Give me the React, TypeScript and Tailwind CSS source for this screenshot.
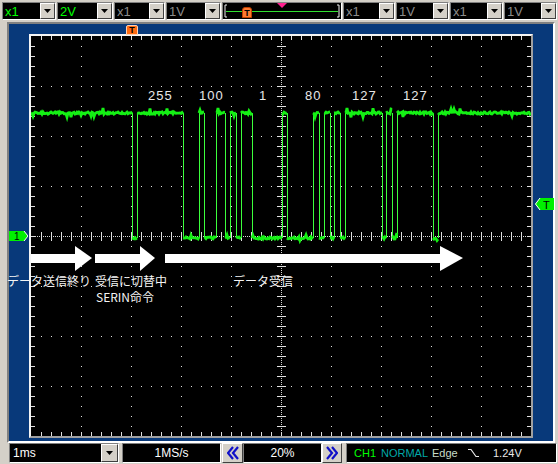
import React from "react";

// transition x positions inside the 500x400 screen (signal starts high)
const EDGES = [101, 106, 152, 168, 173, 185, 194, 199, 205, 210, 221, 251, 256, 282, 288, 293, 299, 303, 309, 314, 351, 355, 361, 366, 402, 407];
const HI = 77;
const LO = 202;

function rng(seed: number) {
  let s = seed;
  return () => {
    s = (s * 1103515245 + 12345) & 0x7fffffff;
    return s / 0x7fffffff;
  };
}

function noisyPath(x0: number, x1: number, y: number, seed: number) {
  const r = rng(seed);
  let d = `M${x0} ${y}`;
  for (let x = x0 + 1; x <= x1; x++) {
    let dy = (r() - 0.5) * 2.2;
    if (r() < 0.07) dy = (r() < 0.6 ? -1 : 1) * (2 + r() * 3);
    d += ` L${x} ${(y + dy).toFixed(1)}`;
  }
  return d;
}

function segments() {
  const out: { x0: number; x1: number; high: boolean }[] = [];
  let x0 = 0;
  let high = true;
  for (const t of EDGES) {
    out.push({ x0, x1: t, high });
    x0 = t;
    high = !high;
  }
  out.push({ x0, x1: 500, high });
  return out;
}

function Screen() {
  const cols = [50, 100, 150, 200, 300, 350, 400, 450];
  const rows = [50, 100, 150, 250, 300, 350];
  const steps = Array.from({ length: 39 }, (_, i) => (i + 1) * 10);
  const stepsX = Array.from({ length: 49 }, (_, i) => (i + 1) * 10);
  const segs = segments();

  return (
    <svg width="500" height="400" viewBox="0 0 500 400" className="block">
      <rect width="500" height="400" fill="#000" />
      {/* grid dots */}
      {cols.map((cx) =>
        steps.map((y) => <rect key={`c${cx}-${y}`} x={cx} y={y} width="1" height="1" fill="#e0e0e0" />)
      )}
      {rows.map((ry) =>
        stepsX.map((x) => <rect key={`r${ry}-${x}`} x={x} y={ry} width="1" height="1" fill="#e0e0e0" />)
      )}
      {/* centre axes */}
      <line x1="250.5" y1="0" x2="250.5" y2="400" stroke="#d8d8d8" strokeDasharray="1 1" />
      <line x1="0" y1="200.5" x2="500" y2="200.5" stroke="#d8d8d8" strokeDasharray="1 1" />
      {steps.map((y) => (
        <line key={`vt${y}`} x1="246" y1={y + 0.5} x2="255" y2={y + 0.5} stroke="#e0e0e0" />
      ))}
      {stepsX.map((x) => (
        <line key={`ht${x}`} x1={x + 0.5} y1="196" x2={x + 0.5} y2="205" stroke="#e0e0e0" />
      ))}
      {/* edge ticks */}
      {stepsX.map((x) => (
        <g key={`et${x}`}>
          <line x1={x + 0.5} y1="0" x2={x + 0.5} y2="4" stroke="#e0e0e0" />
          <line x1={x + 0.5} y1="396" x2={x + 0.5} y2="400" stroke="#e0e0e0" />
        </g>
      ))}
      {steps.map((y) => (
        <g key={`el${y}`}>
          <line x1="0" y1={y + 0.5} x2="4" y2={y + 0.5} stroke="#e0e0e0" />
          <line x1="496" y1={y + 0.5} x2="500" y2={y + 0.5} stroke="#e0e0e0" />
        </g>
      ))}

      {/* waveform */}
      {EDGES.map((x) => (
        <line key={`e${x}`} x1={x + 0.5} y1={HI} x2={x + 0.5} y2={LO} stroke="#3cff3c" strokeWidth="1" />
      ))}
      {segs.map((s, i) => (
        <path
          key={`s${i}`}
          d={noisyPath(s.x0, s.x1, s.high ? HI : LO, 17 + i * 31)}
          fill="none"
          stroke="#14f014"
          strokeWidth="2.8"
        />
      ))}

      {/* byte values */}
      <g fill="#e8e8e8" fontFamily="Liberation Sans, Arial, sans-serif" fontSize="13" letterSpacing="1">
        <text x="117" y="64">255</text>
        <text x="168" y="64">100</text>
        <text x="228" y="64">1</text>
        <text x="274" y="64">80</text>
        <text x="321" y="64">127</text>
        <text x="372" y="64">127</text>
      </g>

      {/* arrows */}
      <g fill="#fff">
        <rect x="0" y="218" width="45" height="9" />
        <polygon points="44,210 61,222 44,235" />
        <rect x="64" y="218" width="46" height="9" />
        <polygon points="109,210 124,222 109,235" />
        <rect x="134" y="218" width="276" height="9" />
        <polygon points="409,210 432,222 409,235" />
      </g>
    </svg>
  );
}

function DropBtn({ w }: { w: string }) {
  return (
    <div
      className={`${w} h-full shrink-0 flex items-center justify-center bg-[#d4d0c8] border border-t-white border-l-white border-b-[#404040] border-r-[#404040]`}
    >
      <svg width="7" height="4" viewBox="0 0 7 4">
        <polygon points="0,0 7,0 3.5,4" fill="#000" />
      </svg>
    </div>
  );
}

function Combo({ w, label, tone }: { w: string; label: string; tone: string }) {
  return (
    <div className={`${w} ml-[1px] h-[18px] flex border border-t-[#808080] border-l-[#808080] border-b-white border-r-white`}>
      <div className={`flex-1 bg-black flex items-center pl-[2px] text-[13px] leading-none ${tone}`}>{label}</div>
      <DropBtn w="w-[15px]" />
    </div>
  );
}

function Chevrons({ dir }: { dir: "left" | "right" }) {
  const pts = dir === "left" ? ["6,1 1,7 6,13", "11,1 6,7 11,13"] : ["1,1 6,7 1,13", "6,1 11,7 6,13"];
  return (
    <svg width="12" height="14" viewBox="0 0 12 14">
      {pts.map((p) => (
        <polyline key={p} points={p} fill="none" stroke="#1010c8" strokeWidth="2.2" />
      ))}
    </svg>
  );
}

function ChevBtn({ w, dir }: { w: string; dir: "left" | "right" }) {
  return (
    <div
      className={`${w} h-[20px] flex items-center justify-center bg-[#d4d0c8] border border-t-white border-l-white border-b-[#404040] border-r-[#404040]`}
    >
      <Chevrons dir={dir} />
    </div>
  );
}

export default function App() {
  return (
    <div className="relative w-[558px] h-[464px] overflow-hidden bg-[#d4d0c8] font-['Liberation_Sans',Arial,sans-serif] select-none">
      {/* channel toolbar */}
      <div className="h-[22px] flex items-start pt-[2px] pl-[1px]">
        <Combo w="w-[54px]" label="x1" tone="text-[#00ff00]" />
        <Combo w="w-[56px]" label="2V" tone="text-[#00ff00]" />
        <Combo w="w-[51px]" label="x1" tone="text-[#8c8c8c]" />
        <Combo w="w-[55px]" label="1V" tone="text-[#8c8c8c]" />
        <div className="relative ml-[1px] w-[120px] h-[18px] bg-black border border-t-[#808080] border-l-[#808080] border-b-white border-r-white">
          <svg width="118" height="16" viewBox="0 0 118 16" className="block">
            <polyline points="4,2 2,2 2,14 4,14" fill="none" stroke="#f0f0f0" />
            <polyline points="114,2 116,2 116,14 114,14" fill="none" stroke="#f0f0f0" />
            <line x1="3" y1="8.5" x2="115" y2="8.5" stroke="#30e030" />
          </svg>
          <span className="absolute left-[19px] top-[4px] w-[10px] h-[11px] rounded-t-[3px] bg-[#ff7a30] border border-[#c04000] text-black text-[9px] font-bold leading-[10px] text-center">
            T
          </span>
          <svg width="10" height="6" viewBox="0 0 10 6" className="absolute left-[54px] top-0">
            <polygon points="0,0 10,0 5,5" fill="#ff1f8f" />
          </svg>
        </div>
        <Combo w="w-[52px]" label="x1" tone="text-[#8c8c8c]" />
        <Combo w="w-[53px]" label="1V" tone="text-[#8c8c8c]" />
        <Combo w="w-[53px]" label="x1" tone="text-[#8c8c8c]" />
        <Combo w="w-[53px]" label="1V" tone="text-[#8c8c8c]" />
      </div>

      {/* scope panel */}
      <div className="h-[421px] pl-[7px] pr-[3px]">
        <div className="h-full border-2 border-t-[#808080] border-l-[#808080] border-b-white border-r-white bg-[#08397a] pl-[20px] pt-[10px]">
          <div className="w-[504px] h-[404px] border-2 border-t-[#f4f4f4] border-l-[#f4f4f4] border-b-[#a0a0a0] border-r-[#a0a0a0]">
            <Screen />
          </div>
        </div>
      </div>

      {/* timebase bar */}
      <div className="h-[21px] flex items-start pl-[8px] text-[12px] leading-none">
        <div className="w-[110px] h-[20px] ml-[1px] flex border border-t-[#808080] border-l-[#808080] border-b-white border-r-white">
          <div className="flex-1 bg-black text-white flex items-center pl-[3px]">1ms</div>
          <DropBtn w="w-[17px]" />
        </div>
        <div className="w-[99px] h-[20px] ml-[3px] bg-black text-white flex items-center justify-center border border-t-[#808080] border-l-[#808080] border-b-white border-r-white">
          1MS/s
        </div>
        <ChevBtn w="w-[21px] ml-[1px]" dir="left" />
        <div className="w-[79px] h-[20px] bg-black text-white flex items-center justify-center border border-t-[#808080] border-l-[#808080] border-b-white border-r-white">
          20%
        </div>
        <ChevBtn w="w-[20px]" dir="right" />
        <div className="w-[211px] h-[20px] ml-[4px] bg-black flex items-center pl-[7px] text-[11px] border border-t-[#808080] border-l-[#808080] border-b-white border-r-white">
          <span className="w-[27px] shrink-0 text-[#00ff00]">CH1</span>
          <span className="w-[51px] shrink-0 text-[#00a8a8]">NORMAL</span>
          <span className="w-[36px] shrink-0 text-[#c8dcc8]">Edge</span>
          <span className="w-[25px] shrink-0 flex items-center">
            <svg width="12" height="10" viewBox="0 0 12 10">
              <polyline points="0,1.5 3,1.5 8,8.5 11,8.5" fill="none" stroke="#e8e8e8" strokeWidth="1.2" />
            </svg>
          </span>
          <span className="text-[#e8e8e8]">1.24V</span>
        </div>
      </div>

      {/* markers over the screen */}
      <span className="absolute left-[126px] top-[25px] w-[12px] h-[10px] rounded-t-[2px] bg-[#ff6a10] border border-[#ffd0b0] text-black text-[9px] font-bold leading-[8px] text-center">
        T
      </span>
      <svg width="19" height="10" viewBox="0 0 19 10" className="absolute left-[9px] top-[231px]">
        <polygon points="0,0 15,0 19,5 15,10 0,10" fill="#00f000" />
        <polyline points="15,0 19,5 15,10" fill="none" stroke="#fff" />
        <text x="5" y="9" fontSize="10" fontFamily="Liberation Sans, Arial, sans-serif" fill="#000">1</text>
      </svg>
      <svg width="19" height="12" viewBox="0 0 19 12" className="absolute left-[535px] top-[198px]">
        <polygon points="0,6 5,0 19,0 19,12 5,12" fill="#00f000" />
        <polyline points="5,0 0.5,6 5,12" fill="none" stroke="#fff" />
        <text x="8" y="10.5" fontSize="11" fontFamily="Liberation Sans, Arial, sans-serif" fill="#000">T</text>
      </svg>

      {/* annotations */}
      <div className="font-['Noto_Sans_CJK_JP',sans-serif] text-[12px] leading-[12px] text-[#f4f4f4]">
        <span className="absolute left-[7px] top-[275px] whitespace-nowrap">データ送信終り</span>
        <span className="absolute left-[95px] top-[275px] whitespace-nowrap">受信に切替中</span>
        <span className="absolute left-[96px] top-[291px] whitespace-nowrap">SERIN命令</span>
        <span className="absolute left-[233px] top-[275px] whitespace-nowrap">データ受信</span>
      </div>
    </div>
  );
}
